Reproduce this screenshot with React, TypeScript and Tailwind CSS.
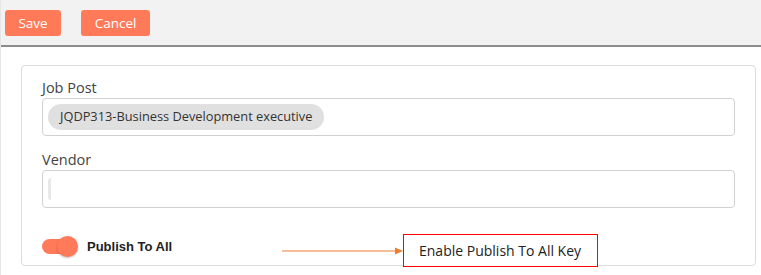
import React from 'react';

const font = { fontFamily: '"Open Sans", "Liberation Sans", sans-serif' };

function Toggle() {
  return (
    <div className="relative h-[21px] w-[37px]">
      <div className="absolute left-0 top-[3px] h-[15px] w-[31px] rounded-full bg-[#ff7a59]" />
      <div className="absolute left-[15px] top-0 h-[21px] w-[21px] rounded-full bg-[#ff7a59] shadow-[0_1px_2px_rgba(0,0,0,0.25)]" />
    </div>
  );
}

export default function App() {
  return (
    <div className="relative h-[275px] w-[761px] overflow-hidden border-l border-[#e6e6e6] bg-white" style={font}>
      <div className="flex h-[47px] items-start gap-[20px] border-b-2 border-[#8c8c8c] bg-[#f2f2f2] pl-[4px] pt-[10px]">
        <button className="h-[26px] w-[56px] rounded-[3px] bg-[#ff7a59] text-[13.5px] text-white">Save</button>
        <button className="h-[26px] w-[69px] rounded-[3px] bg-[#ff7a59] text-[13.5px] text-white">Cancel</button>
      </div>

      <div className="ml-[20px] mt-[18px] h-[201px] w-[735px] rounded-[4px] border border-[#dcdcdc] px-[20px] pt-[12px]">
        <div className="text-[14.5px] leading-[20px] text-[#444]">Job Post</div>
        <div className="flex h-[38px] items-center rounded-[4px] border border-[#d0d0d0] pl-[5px]">
          <span className="flex h-[26px] items-center rounded-full bg-[#e0e0e0] px-[12px] text-[12.8px] text-[#333]">
            JQDP313-Business Development executive
          </span>
        </div>

        <div className="mt-[13px] text-[14.5px] leading-[21px] text-[#444]">Vendor</div>
        <div className="flex h-[38px] items-center rounded-[4px] border border-[#d0d0d0] pl-[5px]">
          <span className="h-[22px] w-[3px] rounded-l-full bg-[#e8e8e8]" />
        </div>

        <div className="mt-[28px] flex items-center gap-[8px]">
          <Toggle />
          <span className="text-[13px] font-bold text-[#222]" style={{ fontFamily: '"Liberation Sans", Arial, sans-serif' }}>
            Publish To All
          </span>
        </div>
      </div>

      <svg className="absolute left-[280px] top-[245px]" width="123" height="12" viewBox="0 0 123 12">
        <line x1="1" y1="6" x2="116" y2="6" stroke="#ed7d31" strokeWidth="1" />
        <path d="M114 2.5 L122 6 L114 9.5 Z" fill="#ed7d31" />
      </svg>

      <div className="absolute left-[402px] top-[234px] flex h-[33px] w-[195px] items-center border border-[#ff0000] bg-white pl-[15px] text-[14px] text-[#222]">
        Enable Publish To All Key
      </div>
    </div>
  );
}
